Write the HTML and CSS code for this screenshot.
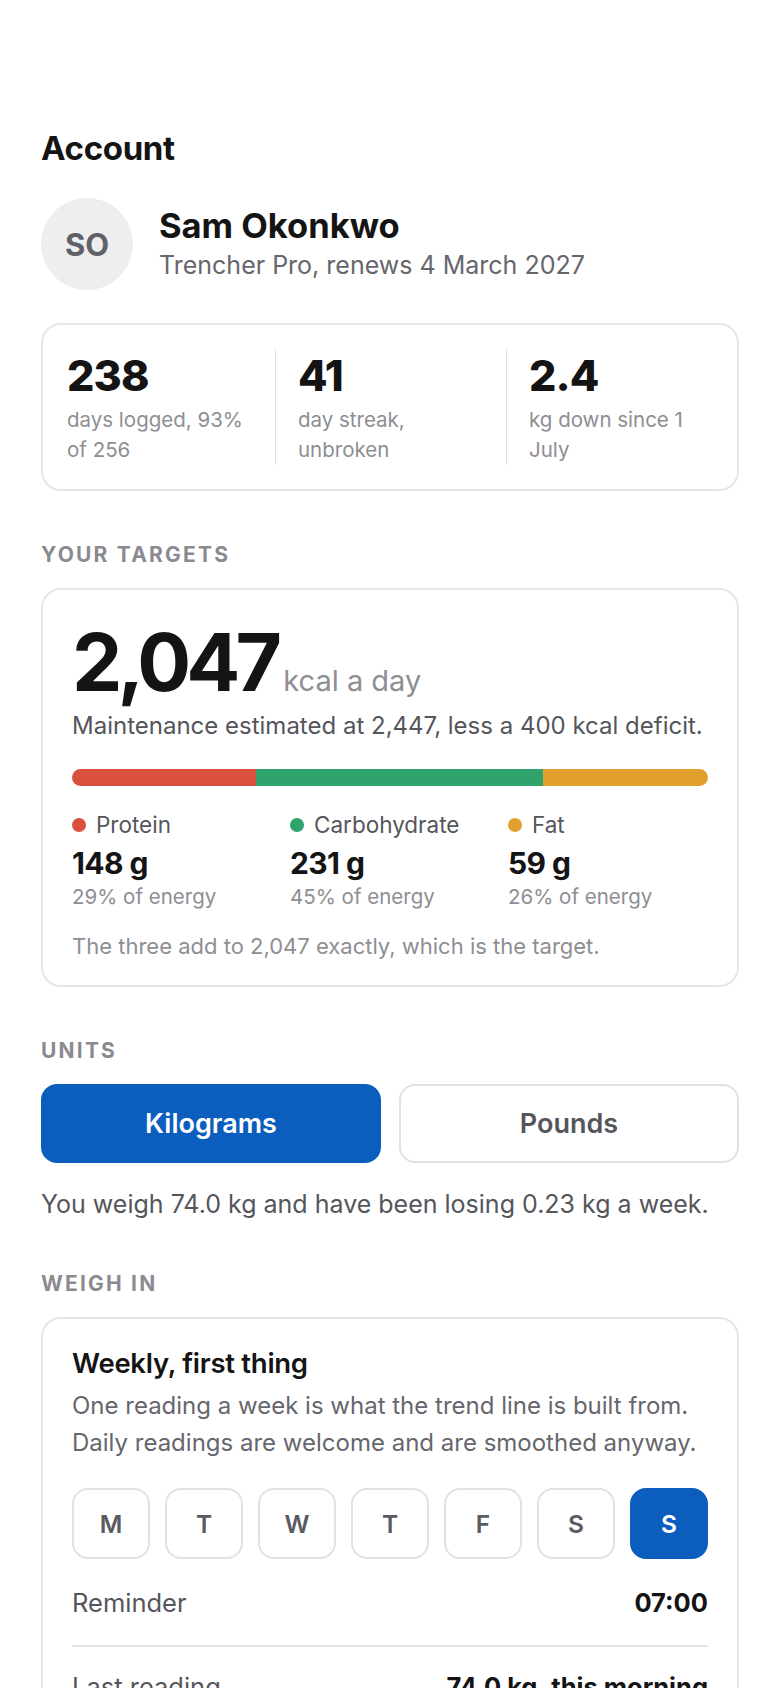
FILE: index.html
```html
<!DOCTYPE html>
<html>
<head>
    <meta charset="UTF-8">
    <title>Account</title>
    <link rel="stylesheet" href="styles.css">
</head>
<body>
    <div class="pagina">
        <h1 class="titulo">Account</h1>

        <div class="perfil">
            <div class="avatar">SO</div>
            <div>
                <div class="nome">Sam Okonkwo</div>
                <div class="plano">Trencher Pro, renews 4 March 2027</div>
            </div>
        </div>

        <div class="cartao estatisticas">
            <div class="estatistica">
                <div class="numero">238</div>
                <div class="legenda">days logged, 93% of 256</div>
            </div>
            <div class="estatistica">
                <div class="numero">41</div>
                <div class="legenda">day streak, unbroken</div>
            </div>
            <div class="estatistica">
                <div class="numero">2.4</div>
                <div class="legenda">kg down since 1 July</div>
            </div>
        </div>

        <div class="secao">Your targets</div>
        <div class="cartao alvos">
            <div class="calorias">
                <span class="kcal">2,047</span>
                <span class="unidade">kcal a day</span>
            </div>
            <p class="manutencao">Maintenance estimated at 2,447, less a 400 kcal deficit.</p>

            <div class="barra">
                <div class="fatia proteina" style="width: 29%"></div>
                <div class="fatia carbo" style="width: 45%"></div>
                <div class="fatia gordura" style="width: 26%"></div>
            </div>

            <div class="macros">
                <div class="macro">
                    <div class="rotulo"><span class="ponto proteina"></span>Protein</div>
                    <div class="gramas">148 g</div>
                    <div class="energia">29% of energy</div>
                </div>
                <div class="macro">
                    <div class="rotulo"><span class="ponto carbo"></span>Carbohydrate</div>
                    <div class="gramas">231 g</div>
                    <div class="energia">45% of energy</div>
                </div>
                <div class="macro">
                    <div class="rotulo"><span class="ponto gordura"></span>Fat</div>
                    <div class="gramas">59 g</div>
                    <div class="energia">26% of energy</div>
                </div>
            </div>
            <p class="nota">The three add to 2,047 exactly, which is the target.</p>
        </div>

        <div class="secao">Units</div>
        <div class="unidades">
            <button class="botao ativo">Kilograms</button>
            <button class="botao">Pounds</button>
        </div>
        <p class="peso">You weigh 74.0 kg and have been losing 0.23 kg a week.</p>

        <div class="secao">Weigh in</div>
        <div class="cartao pesagem">
            <div class="pesagem-titulo">Weekly, first thing</div>
            <p class="pesagem-texto">One reading a week is what the trend line is built from. Daily readings are welcome and are smoothed anyway.</p>

            <div class="dias">
                <div class="dia">M</div>
                <div class="dia">T</div>
                <div class="dia">W</div>
                <div class="dia">T</div>
                <div class="dia">F</div>
                <div class="dia">S</div>
                <div class="dia ativo">S</div>
            </div>

            <div class="linha">
                <span>Reminder</span>
                <strong>07:00</strong>
            </div>
            <div class="linha">
                <span>Last reading</span>
                <strong>74.0 kg, this morning</strong>
            </div>
        </div>
    </div>
</body>
</html>
```

FILE: styles.css
```css
body {
    margin: 0;
    font-family: Inter, "Noto Sans", sans-serif;
    background-color: #ffffff;
    color: #141414;
}

.pagina {
    padding: 128px 41px 40px;
}

.titulo {
    font-size: 33px;
    font-weight: 700;
    letter-spacing: -0.01em;
    margin: 0 0 30px;
    line-height: 40px;
}

.perfil {
    display: flex;
    align-items: center;
    gap: 26px;
    margin-bottom: 33px;
}

.avatar {
    width: 92px;
    height: 92px;
    border-radius: 50%;
    background-color: #eeeef0;
    color: #606068;
    font-size: 31px;
    font-weight: 700;
    display: flex;
    align-items: center;
    justify-content: center;
    flex-shrink: 0;
}

.nome {
    font-size: 34.5px;
    font-weight: 700;
    line-height: 42px;
}

.plano {
    font-size: 25px;
    color: #66666d;
    line-height: 36px;
}

.cartao {
    border: 2px solid #e6e6e8;
    border-radius: 20px;
}

.estatisticas {
    display: flex;
    gap: 24px;
    padding: 24px;
}

.estatistica {
    flex: 1;
}

.estatistica + .estatistica {
    border-left: 1px solid #e0e0e3;
    padding-left: 22px;
}

.numero {
    font-size: 43px;
    font-weight: 800;
    letter-spacing: -0.02em;
    line-height: 52px;
    margin-bottom: 4px;
}

.legenda {
    font-size: 20.5px;
    color: #8e8e93;
    line-height: 30px;
}

.secao {
    font-size: 21px;
    font-weight: 700;
    color: #8a8a90;
    text-transform: uppercase;
    letter-spacing: 0.105em;
    line-height: 26px;
    margin: 51px 0 20px;
}

.alvos {
    padding: 29px 29px 24px;
}

.calorias {
    display: flex;
    align-items: baseline;
    gap: 6px;
}

.kcal {
    font-size: 80px;
    font-weight: 700;
    letter-spacing: -0.06em;
    line-height: 86px;
}

.unidade {
    font-size: 29px;
    color: #8e8e93;
}

.manutencao {
    margin: 5px 0 0;
    font-size: 24px;
    color: #55555c;
    line-height: 32px;
}

.barra {
    display: flex;
    height: 17px;
    border-radius: 9px;
    overflow: hidden;
    margin: 27px 0 24px;
}

.proteina { background-color: #d9503e; }
.carbo { background-color: #2fa36b; }
.gordura { background-color: #e2a02e; }

.macros {
    display: grid;
    grid-template-columns: repeat(3, 1fr);
    gap: 18px;
}

.rotulo {
    display: flex;
    align-items: center;
    gap: 10px;
    font-size: 22.5px;
    color: #55555c;
    line-height: 30px;
}

.ponto {
    width: 14px;
    height: 14px;
    border-radius: 50%;
}

.gramas {
    font-size: 30px;
    font-weight: 700;
    letter-spacing: -0.02em;
    line-height: 36px;
    margin-top: 5px;
}

.energia {
    font-size: 20.5px;
    color: #8e8e93;
    line-height: 28px;
    margin-top: 2px;
}

.nota {
    margin: 20px 0 0;
    font-size: 22px;
    color: #8e8e93;
    line-height: 30px;
}

.unidades {
    display: flex;
    gap: 18px;
}

.botao {
    flex: 1;
    height: 79px;
    border-radius: 16px;
    border: 2px solid #e2e2e5;
    background-color: #ffffff;
    color: #55555c;
    font-family: inherit;
    font-size: 27px;
    font-weight: 600;
}

.botao.ativo {
    background-color: #0c5ebe;
    border-color: #0c5ebe;
    color: #ffffff;
}

.peso {
    margin: 25px 0 0;
    font-size: 25px;
    color: #55555c;
    line-height: 32px;
}

.pesagem {
    padding: 26px 29px 10px;
}

.pesagem-titulo {
    font-size: 27.5px;
    font-weight: 600;
    letter-spacing: -0.01em;
    line-height: 36px;
}

.pesagem-texto {
    margin: 6px 0 0;
    font-size: 24px;
    color: #66666d;
    line-height: 37px;
}

.dias {
    display: grid;
    grid-template-columns: repeat(7, 1fr);
    gap: 15px;
    margin: 27px 0 0;
}

.dia {
    height: 71px;
    box-sizing: border-box;
    border: 2px solid #e2e2e5;
    border-radius: 16px;
    display: flex;
    align-items: center;
    justify-content: center;
    font-size: 24.5px;
    font-weight: 600;
    color: #5a5a61;
}

.dia.ativo {
    background-color: #0c5ebe;
    border-color: #0c5ebe;
    color: #ffffff;
}

.linha {
    display: flex;
    justify-content: space-between;
    align-items: center;
    padding: 28px 0 26px;
    font-size: 25.5px;
    line-height: 32px;
    color: #55555c;
}

.linha + .linha {
    border-top: 2px solid #e6e6e8;
    padding-top: 24px;
}

.linha strong {
    color: #141414;
    font-weight: 700;
}
```
